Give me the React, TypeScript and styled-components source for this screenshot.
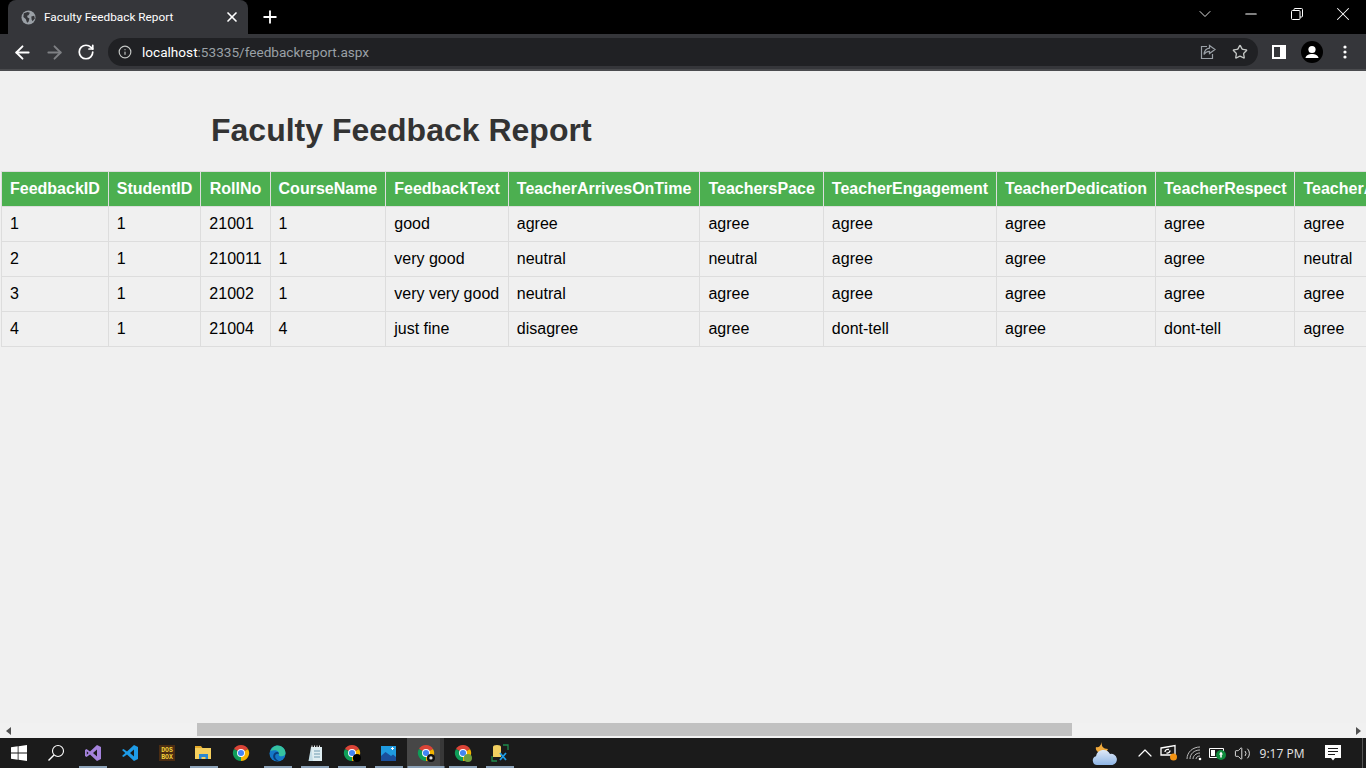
import * as React from "react";
import styled, { createGlobalStyle } from "styled-components";
import {
  ArrowLeft,
  ArrowRight,
  ChevronDown,
  ChevronUp,
  Info,
  Minus,
  Plus,
  RotateCw,
  Star,
  Volume2,
  X,
} from "lucide-react";

const GlobalStyle = createGlobalStyle`
  html, body {
    margin: 0;
    height: 100%;
    overflow: hidden;
    background: #f0f0f0;
    font-family: "Liberation Sans", Arial, sans-serif;
  }
`;

const Shell = styled.div`
  display: flex;
  flex-direction: column;
  width: 1366px;
  height: 768px;
  overflow: hidden;
`;

/* browser chrome */

const TitleBar = styled.div`
  display: flex;
  align-items: flex-end;
  flex: 0 0 34px;
  background: #000;
  color: #fff;
  padding-left: 8px;
`;

const Tab = styled.div`
  display: flex;
  align-items: center;
  width: 240px;
  height: 34px;
  box-sizing: border-box;
  padding: 0 8px 0 13px;
  background: #35363a;
  border-radius: 8px 8px 0 0;
`;

const TabTitle = styled.span`
  flex: 1;
  margin-left: 8px;
  font: 11.8px Roboto, "Noto Sans", sans-serif;
  color: #fff;
`;

const NewTab = styled.div`
  display: flex;
  margin: 0 0 7px 12px;
`;

const WindowControls = styled.div`
  display: flex;
  margin-left: auto;
  height: 34px;
`;

const WindowButton = styled.div`
  display: flex;
  align-items: center;
  justify-content: center;
  width: 46px;
  height: 28px;
`;

const Toolbar = styled.div`
  display: flex;
  align-items: center;
  flex: 0 0 37px;
  box-sizing: border-box;
  padding-top: 1px;
  background: #35363a;
  border-bottom: 2px solid #4a4b4e;
`;

const NavButton = styled.div<{ $width?: number }>`
  display: flex;
  align-items: center;
  justify-content: center;
  flex: 0 0 ${(p) => p.$width ?? 32}px;
  color: #fff;
`;

const NavGroup = styled.div`
  display: flex;
  padding: 0 6px 0 6px;
`;

const Omnibox = styled.div`
  display: flex;
  align-items: center;
  flex: 0 0 1150px;
  height: 28px;
  box-sizing: border-box;
  padding: 0 2px 0 10px;
  border-radius: 14px;
  background: #202124;
`;

const Url = styled.div`
  flex: 1;
  margin-left: 10px;
  font: 13.6px Roboto, "Noto Sans", sans-serif;
  color: #9aa0a6;
`;

const Host = styled.span`
  color: #fff;
`;

const ToolbarEnd = styled.div`
  display: flex;
  align-items: center;
  padding-left: 5px;
`;

const Avatar = styled.div`
  display: flex;
  width: 22px;
  height: 22px;
  border-radius: 50%;
  background: #000;
  overflow: hidden;
`;

/* page */

const Page = styled.div`
  flex: 1;
  min-height: 0;
  overflow: hidden;
  background: #f0f0f0;
`;

const Heading = styled.h1`
  margin: 41px 0 22px 211px;
  font-size: 32px;
  line-height: 37px;
  font-weight: 700;
  color: #333;
`;

const Table = styled.table`
  margin-left: 1px;
  width: max-content;
  border-collapse: collapse;
  white-space: nowrap;
  font-size: 16px;
`;

const Th = styled.th`
  padding: 8px;
  border: 1px solid #ddd;
  background: #4caf50;
  color: #fff;
`;

const Td = styled.td`
  padding: 8px;
  border: 1px solid #ddd;
  color: #000;
`;

const ScrollBar = styled.div`
  display: flex;
  flex: 0 0 15px;
  background: #f1f1f1;
`;

const ScrollArrow = styled.div<{ $dir: "left" | "right" }>`
  flex: 0 0 16px;
  display: flex;
  align-items: center;
  justify-content: center;
  margin-left: ${(p) => (p.$dir === "right" ? "auto" : "0")};
  &::before {
    content: "";
    border-style: solid;
    border-width: 4px 0 4px 5px;
    border-color: transparent transparent transparent #505050;
    transform: ${(p) => (p.$dir === "left" ? "rotate(180deg)" : "none")};
  }
`;

const ScrollThumb = styled.div`
  flex: 0 0 875px;
  height: 13px;
  margin-left: 181px;
  background: #c1c1c1;
`;

/* taskbar */

const Taskbar = styled.div`
  display: flex;
  align-items: center;
  flex: 0 0 30px;
  background: #1b1b1b;
`;

const Slot = styled.div<{ $running?: boolean; $active?: boolean }>`
  position: relative;
  display: flex;
  align-items: center;
  justify-content: center;
  flex: 0 0 37px;
  height: 30px;
  background: ${(p) =>
    p.$active ? "linear-gradient(90deg, #474747 0 33px, #383838 33px)" : "transparent"};
  &::after {
    content: "";
    display: ${(p) => (p.$running ? "block" : "none")};
    position: absolute;
    bottom: 0;
    left: 50%;
    width: ${(p) => (p.$active ? 37 : 28)}px;
    height: 2px;
    transform: translateX(-50%);
    background: #8da3b9;
  }
`;

const Tray = styled.div`
  display: flex;
  align-items: center;
  margin-left: auto;
  height: 30px;
`;

const TrayIcon = styled.div<{ $width: number }>`
  display: flex;
  align-items: center;
  justify-content: center;
  flex: 0 0 ${(p) => p.$width}px;
  color: #fff;
`;

const WeatherSlot = styled.div`
  display: flex;
  justify-content: flex-start;
  box-sizing: border-box;
  flex: 0 0 47px;
  padding-left: 6px;
`;

const Clock = styled.div`
  flex: 0 0 56px;
  text-align: center;
  font: 12px "Open Sans", "Noto Sans", sans-serif;
  color: #e6e6e6;
`;

const ShowDesktop = styled.div`
  flex: 0 0 1px;
  height: 30px;
  margin: 0 3px 0 6px;
  background: #555;
`;

/* drawings */

const Globe = () => (
  <svg width="15" height="15" viewBox="0 0 16 16">
    <circle cx="8" cy="8" r="7.5" fill="#9aa0a6" />
    <path d="M3 3.500 7 2l2.500 1L8 5.500 6.500 6 7 8l2 1-1 3.500-1.500 1L5 9.500 2.500 7.500zM11 7l3-1 .8 3-2.500 3-1-2z" fill="#35363a" />
  </svg>
);

const RestoreIcon = () => (
  <svg width="12" height="12" viewBox="0 0 12 12" fill="none" stroke="#fff" strokeWidth="1">
    <rect x="0.5" y="2.5" width="8.5" height="9" rx="1" />
    <path d="M3 2.500V1.500a1 1 0 0 1 1-1h6.500a1 1 0 0 1 1 1V8a1 1 0 0 1-1 1H9" />
  </svg>
);

const ShareIcon = () => (
  <svg width="16" height="16" viewBox="0 0 16 16" fill="none" stroke="#9aa0a6" strokeWidth="1.2">
    <path d="M7 2.500H1.500v12h11V10" />
    <path d="M9.500 1.500 15 5.500 9.500 9.500V7.300C7 7.300 5.300 8.200 4 10.500c.3-3.500 2.200-5.900 5.500-6.300z" />
  </svg>
);

const SidePanelIcon = () => (
  <svg width="14" height="14" viewBox="0 0 14 14">
    <path d="M0 0h14v14H0z" fill="#fff" />
    <path d="M2 2h6v10H2z" fill="#35363a" />
  </svg>
);

const MenuDots = () => (
  <svg width="4" height="14" viewBox="0 0 4 14" fill="#fff">
    <circle cx="2" cy="2" r="1.6" />
    <circle cx="2" cy="7" r="1.6" />
    <circle cx="2" cy="12" r="1.6" />
  </svg>
);

const AvatarIcon = () => (
  <svg width="22" height="22" viewBox="0 0 22 22" fill="#fff">
    <circle cx="11" cy="8.5" r="3.6" />
    <path d="M4.500 17c.4-2.800 3.400-4 6.500-4s6.100 1.200 6.500 4z" />
  </svg>
);

const WindowsLogo = () => (
  <svg width="16" height="16" viewBox="0 0 16 16" fill="#fff">
    <path d="M0 2.300 6.700 1.300v6.300H0zM7.500 1.200 16 0v7.600H7.500zM0 8.400h6.700v6.300L0 13.700zM7.500 8.400H16V16l-8.500-1.200z" />
  </svg>
);

const SearchIcon = () => (
  <svg width="18" height="18" viewBox="0 0 18 18" fill="none" stroke="#fff">
    <circle cx="11" cy="7" r="5.500" strokeWidth="1.100" />
    <path d="M7 11 1.500 16.500" strokeWidth="1.500" />
  </svg>
);

const VisualStudio = () => (
  <svg width="18" height="18" viewBox="0 0 18 18">
    <path d="M13 1 17 3v12l-4 2-7-6.500L2.500 13 1 12V6l1.500-1L6 7.500zM13 5.500 9 9l4 3.500zM2.800 7.200v3.600L4.600 9z" fill="#a583dd" fillRule="evenodd" />
  </svg>
);

const VsCode = () => (
  <svg width="18" height="18" viewBox="0 0 18 18">
    <path d="M13 1 17 3v12l-4 2-7-6.500L2.500 13 1 12l3.300-3L1 6l1.500-1L6 7.500zM13 5.500 9 9l4 3.500z" fill="#1e9ce8" fillRule="evenodd" />
  </svg>
);

const DosBox = () => (
  <svg width="16" height="16" viewBox="0 0 16 16">
    <rect width="16" height="16" fill="#4a2c12" />
    <text x="8" y="7" textAnchor="middle" fontSize="6.500" fontWeight="700" fontFamily="Liberation Mono" fill="#f2d13c">DOS</text>
    <text x="8" y="14" textAnchor="middle" fontSize="6.500" fontWeight="700" fontFamily="Liberation Mono" fill="#f2d13c">BOX</text>
  </svg>
);

const Explorer = () => (
  <svg width="17" height="16" viewBox="0 0 17 16">
    <path d="M0 1h6l1.500 2H0z" fill="#e3a92b" />
    <path d="M0 3h16v11H0z" fill="#f5cf5d" />
    <path d="M4 9h9v5h-2.500v-2h-4v2H4z" fill="#2a87d0" />
  </svg>
);

const Chrome = ({ badge }: { badge?: "black" | "ring" | "green" }) => (
  <svg width="18" height="18" viewBox="0 0 20 20">
    <path d="M10 10 2.200 5.500A9 9 0 0 1 17.800 5.500z" fill="#db4437" />
    <path d="M10 10 17.800 5.500A9 9 0 0 1 10 19z" fill="#f4b400" />
    <path d="M10 10 10 19A9 9 0 0 1 2.200 5.500z" fill="#0f9d58" />
    <circle cx="10" cy="10" r="4.400" fill="#fff" />
    <circle cx="10" cy="10" r="3.400" fill="#4285f4" />
    {badge === "black" && <circle cx="15.500" cy="15.500" r="4.500" fill="#000" />}
    {badge === "ring" && (
      <>
        <circle cx="15.500" cy="15.500" r="4.500" fill="#111" />
        <circle cx="15.500" cy="15.500" r="1.800" fill="#ddd" />
      </>
    )}
    {badge === "green" && <circle cx="15.500" cy="15.500" r="4.500" fill="#6f9e3f" />}
  </svg>
);

const Edge = () => (
  <svg width="17" height="17" viewBox="0 0 18 18">
    <circle cx="9" cy="9" r="8.500" fill="#1478c8" />
    <path d="M1.500 6.500C3 2 7 .5 9 .5c4.500 0 8.500 3.500 8.500 8 0 2.500-2 3.500-4 3.500-2.500 0-3.500-1-3-2.500C11 8 9 5.500 6.500 5.500c-2 0-4 .500-5 1z" fill="#36c3a0" />
    <path d="M10.500 9.500c-1.500-.5-4 0-4 2.500 0 2 1.500 4 4 5-4 .500-6.500-3-6-6 .500-2 2-3.500 4-3.500 1 0 2 .500 2 2z" fill="#0b3d7a" />
  </svg>
);

const Notepad = () => (
  <svg width="16" height="17" viewBox="0 0 16 17">
    <path d="M4 2h11v14H1.500z" fill="#c3dde6" />
    <path d="M4 2h11v14H6z" fill="#dfeef2" />
    <path d="M5 .5v2M7.500.5v2M10 .5v2M12.500.5v2" stroke="#eee" />
    <path d="M7 6h6M7 9h6M7 12h6" stroke="#6f9bb0" />
  </svg>
);

const Photos = () => (
  <svg width="15" height="15" viewBox="0 0 15 15">
    <rect width="15" height="15" fill="#1f9be0" />
    <path d="M0 15V10l4.500-4L10 10l2-1.500L15 11v4z" fill="#1a4f9c" />
    <path d="M10 2.500h3M11.500 1v3" stroke="#fff" />
  </svg>
);

const DbTool = () => (
  <svg width="18" height="18" viewBox="0 0 18 18">
    <path d="M2 3a4 2 0 0 1 8 0v10H2z" fill="#f2cf60" />
    <path d="M12 1h5v5M1 12v5h5" fill="none" stroke="#1f8a4c" strokeWidth="1.300" />
    <path d="M9 9l6 7M15 9l-6 7" stroke="#1e9ce8" strokeWidth="1.800" />
  </svg>
);

const Weather = () => (
  <svg width="26" height="26" viewBox="0 0 26 26">
    <defs>
      <linearGradient id="cloud" x1="0" y1="0" x2="0" y2="1">
        <stop offset="0" stopColor="#dfe9f7" />
        <stop offset="1" stopColor="#8fb6e6" />
      </linearGradient>
    </defs>
    <path d="M10 2c-1 4 1 7 6 7-1 3-4 4-6 4-4 0-7-3-6-6 2 1 4 0 6-5z" fill="#f0a93b" />
    <path d="M5 25a4.500 4.500 0 0 1-1-8.800A7.500 7.500 0 0 1 18 14a5.500 5.500 0 0 1 2.500 11z" fill="url(#cloud)" />
  </svg>
);

const CastIcon = () => (
  <svg width="18" height="18" viewBox="0 0 18 18" fill="none" stroke="#fff" strokeWidth="1.300">
    <path d="M1 4 15 1.500V11H1z" />
    <path d="M5 8c0-2 2-3 4-2.500M10 6.500c0 1.500-1.500 3-3.500 2.500" />
    <circle cx="13.500" cy="13" r="3.500" fill="#f39313" stroke="none" />
  </svg>
);

const WifiIcon = () => (
  <svg width="16" height="16" viewBox="0 0 16 16" fill="none" stroke="#bbb">
    <path d="M1 14C1 7 7 2 14 2M4 14c0-5 4-9 10-9M7 14c0-3 3-6 7-6M10 14c0-1.500 1.500-3 4-3" />
    <circle cx="14" cy="14" r="1.300" fill="#fff" stroke="none" />
  </svg>
);

const BatteryIcon = () => (
  <svg width="18" height="16" viewBox="0 0 18 16">
    <path d="M.5 3.500h14v9H.5z" fill="none" stroke="#fff" />
    <path d="M2 5h4v6H2z" fill="#fff" />
    <circle cx="12" cy="10" r="5" fill="#0f8a3c" />
    <path d="M12 6.500 14 9.500h-1.200v3h-1.600v-3H10z" fill="#fff" />
  </svg>
);

const NotificationIcon = () => (
  <svg width="16" height="16" viewBox="0 0 16 16">
    <path d="M0 0h16v13H10l-2 2.500L6 13H0z" fill="#fff" />
    <path d="M3 3.500h10M3 6.500h10M3 9.500h7" stroke="#1b1b1b" />
  </svg>
);

/* data */

const columns = [
  "FeedbackID",
  "StudentID",
  "RollNo",
  "CourseName",
  "FeedbackText",
  "TeacherArrivesOnTime",
  "TeachersPace",
  "TeacherEngagement",
  "TeacherDedication",
  "TeacherRespect",
  "TeacherAvailability",
];

const rows = [
  ["1", "1", "21001", "1", "good", "agree", "agree", "agree", "agree", "agree", "agree"],
  ["2", "1", "210011", "1", "very good", "neutral", "neutral", "agree", "agree", "agree", "neutral"],
  ["3", "1", "21002", "1", "very very good", "neutral", "agree", "agree", "agree", "agree", "agree"],
  ["4", "1", "21004", "4", "just fine", "disagree", "agree", "dont-tell", "agree", "dont-tell", "agree"],
];

const apps = [
  { icon: <WindowsLogo /> },
  { icon: <SearchIcon /> },
  { icon: <VisualStudio />, running: true },
  { icon: <VsCode /> },
  { icon: <DosBox /> },
  { icon: <Explorer />, running: true },
  { icon: <Chrome /> },
  { icon: <Edge />, running: true },
  { icon: <Notepad />, running: true },
  { icon: <Chrome badge="black" />, running: true },
  { icon: <Photos />, running: true },
  { icon: <Chrome badge="ring" />, running: true, active: true },
  { icon: <Chrome badge="green" />, running: true },
  { icon: <DbTool />, running: true },
];

const App: React.FC = () => {
  return (
    <Shell>
      <GlobalStyle />
      <TitleBar>
        <Tab>
          <Globe />
          <TabTitle>Faculty Feedback Report</TabTitle>
          <X size={16} color="#fff" strokeWidth={2.5} />
        </Tab>
        <NewTab>
          <Plus size={20} color="#fff" strokeWidth={2.2} />
        </NewTab>
        <WindowControls>
          <WindowButton>
            <ChevronDown size={20} color="#ddd" strokeWidth={1.2} />
          </WindowButton>
          <WindowButton>
            <Minus size={18} color="#fff" strokeWidth={1.4} />
          </WindowButton>
          <WindowButton>
            <RestoreIcon />
          </WindowButton>
          <WindowButton>
            <X size={22} color="#fff" strokeWidth={1.1} />
          </WindowButton>
        </WindowControls>
      </TitleBar>

      <Toolbar>
        <NavGroup>
          <NavButton>
            <ArrowLeft size={21} strokeWidth={2.2} />
          </NavButton>
          <NavButton>
            <ArrowRight size={21} strokeWidth={2.2} color="#7f8084" />
          </NavButton>
          <NavButton>
            <RotateCw size={18} strokeWidth={2.3} />
          </NavButton>
        </NavGroup>
        <Omnibox>
          <Info size={14} color="#c4c7c5" />
          <Url>
            <Host>localhost</Host>:53335/feedbackreport.aspx
          </Url>
          <NavButton>
            <ShareIcon />
          </NavButton>
          <NavButton>
            <Star size={16} color="#c4c7c5" strokeWidth={2} />
          </NavButton>
        </Omnibox>
        <ToolbarEnd>
          <NavButton $width={32}>
            <SidePanelIcon />
          </NavButton>
          <NavButton $width={34}>
            <Avatar>
              <AvatarIcon />
            </Avatar>
          </NavButton>
          <NavButton $width={32}>
            <MenuDots />
          </NavButton>
        </ToolbarEnd>
      </Toolbar>

      <Page>
        <Heading>Faculty Feedback Report</Heading>
        <Table>
          <thead>
            <tr>
              {columns.map((column) => (
                <Th key={column}>{column}</Th>
              ))}
            </tr>
          </thead>
          <tbody>
            {rows.map((row, index) => (
              <tr key={index}>
                {row.map((cell, cellIndex) => (
                  <Td key={cellIndex}>{cell}</Td>
                ))}
              </tr>
            ))}
          </tbody>
        </Table>
      </Page>

      <ScrollBar>
        <ScrollArrow $dir="left" />
        <ScrollThumb />
        <ScrollArrow $dir="right" />
      </ScrollBar>

      <Taskbar>
        {apps.map((app, index) => (
          <Slot key={index} $running={app.running} $active={app.active}>
            {app.icon}
          </Slot>
        ))}
        <Tray>
          <WeatherSlot>
            <Weather />
          </WeatherSlot>
          <TrayIcon $width={24}>
            <ChevronUp size={24} strokeWidth={1.2} />
          </TrayIcon>
          <TrayIcon $width={24}>
            <CastIcon />
          </TrayIcon>
          <TrayIcon $width={25}>
            <WifiIcon />
          </TrayIcon>
          <TrayIcon $width={24}>
            <BatteryIcon />
          </TrayIcon>
          <TrayIcon $width={24}>
            <Volume2 size={17} strokeWidth={1.2} />
          </TrayIcon>
          <Clock>9:17 PM</Clock>
          <TrayIcon $width={46}>
            <NotificationIcon />
          </TrayIcon>
          <ShowDesktop />
        </Tray>
      </Taskbar>
    </Shell>
  );
};

export default App;
